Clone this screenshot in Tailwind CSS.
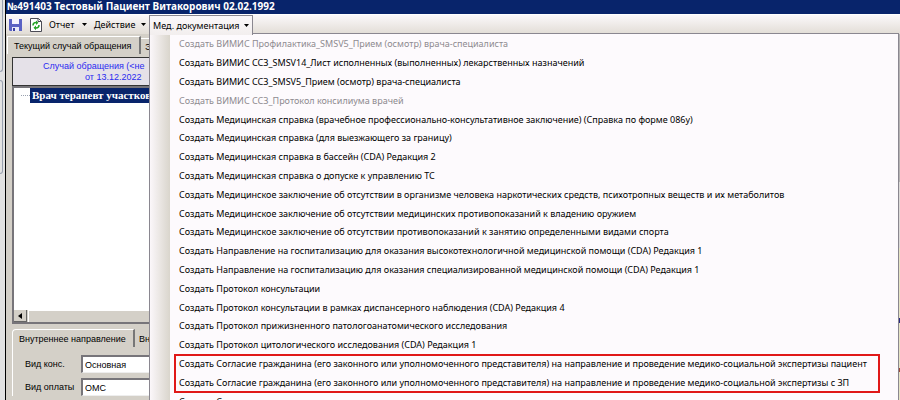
<!DOCTYPE html>
<html lang="ru">
<head>
  <meta charset="UTF-8" />
  <meta name="viewport" content="width=device-width, initial-scale=1.0"/>
  <title>Карта пациента</title>
  <script src="https://cdn.jsdelivr.net/npm/@tailwindcss/browser@4"></script>
</head>
<body class="h-screen overflow-hidden bg-[#d4d0c8] font-['Noto_Sans',sans-serif] text-[9px] leading-3 text-black flex">

  <!-- Edge of the neighbouring panel -->
  <div class="w-[6px] shrink-0 bg-[#e2e2e2] border-r border-black flex flex-col gap-2">
    <div class="w-[3px] h-[72px] border-r border-b border-gray-400 rounded-br-sm"></div>
    <div class="w-[3px] h-[94px] border-r border-y border-gray-400 rounded-r-sm"></div>
  </div>

  <div class="flex-1 min-w-0 flex flex-col">
    <h1 class="h-[14px] shrink-0 bg-[#08246b] text-white font-bold text-[10px] leading-3 pl-px whitespace-nowrap">№491403 Тестовый Пациент Витакорович 02.02.1992</h1>

    <!-- Toolbar -->
    <div class="relative h-5 shrink-0 border-t border-white bg-linear-to-b from-[#fbf8fa] to-[#e2ddd6] flex items-center whitespace-nowrap">
      <button class="ml-[3px] shrink-0" aria-label="Сохранить">
        <svg viewBox="0 0 13 12" class="w-[13px] h-3"><path d="M0 0h13v12H1L0 11z" fill="#5a62c4"/><path d="M3 0h7v5H3z" fill="#f4f4ff"/><path d="M3 8h7v4H3z" fill="#e8eafa"/><path d="M4 9h2v3H4z" fill="#3a3fa0"/></svg>
      </button>
      <button class="ml-2 shrink-0" aria-label="Обновить">
        <svg viewBox="0 0 12 14" class="w-3 h-[14px]"><path d="M.5.5h8l3 3v10H.5z" fill="#fff" stroke="#4b4b55"/><path d="M8 .5v3h3.500" fill="none" stroke="#4b4b55"/><path d="M3 7.500C3 5 5 4.500 6 4.500M9 7c0 2.500-2 3-3 3" fill="none" stroke="#25a325" stroke-width="1.500"/><path d="M6 2.500 8.500 4.700 6 7zM6 7.500v4.700L3.500 9.800z" fill="#25a325"/></svg>
      </button>
      <button class="ml-[7px] w-[38px] flex items-center justify-between">Отчет
        <svg viewBox="0 0 5 3" class="w-[5px] h-[3px]"><path d="M0 0h5L2.500 3z"/></svg>
      </button>
      <button class="ml-[7px] w-[52px] flex items-center justify-between">Действие
        <svg viewBox="0 0 5 3" class="w-[5px] h-[3px]"><path d="M0 0h5L2.500 3z"/></svg>
      </button>
      <button class="absolute left-[143px] top-0 z-20 h-5 w-[104px] border border-b-0 border-[#8a8790] bg-linear-to-b from-[#fbf8fa] to-[#f2eeee] flex items-center justify-between px-[3px]" aria-expanded="true">Мед. документация
        <svg viewBox="0 0 5 3" class="w-[5px] h-[3px]"><path d="M0 0h5L2.500 3z"/></svg>
      </button>

      <!-- Opened menu -->
      <div class="absolute left-[143px] right-px top-[18px] z-10 border border-[#8a8790] bg-[#fdfafd] flex pt-px">
        <div class="w-5 shrink-0 bg-linear-to-r from-[#fbf7fa] to-[#d9d5cc]"></div>
        <ul class="h-[376px] flex-1 min-w-0 pl-[9px] flex flex-col">
          <li class="flex-1 flex items-center"><button class="text-[#8e8b90]" disabled>Создать ВИМИС Профилактика_SMSV5_Прием (осмотр) врача-специалиста</button></li>
          <li class="flex-1 flex items-center"><button>Создать ВИМИС ССЗ_SMSV14_Лист исполненных (выполненных) лекарственных назначений</button></li>
          <li class="flex-1 flex items-center"><button>Создать ВИМИС ССЗ_SMSV5_Прием (осмотр) врача-специалиста</button></li>
          <li class="flex-1 flex items-center"><button class="text-[#8e8b90]" disabled>Создать ВИМИС ССЗ_Протокол консилиума врачей</button></li>
          <li class="flex-1 flex items-center"><button>Создать Медицинская справка (врачебное профессионально-консультативное заключение) (Справка по форме 086у)</button></li>
          <li class="flex-1 flex items-center"><button>Создать Медицинская справка (для выезжающего за границу)</button></li>
          <li class="flex-1 flex items-center"><button>Создать Медицинская справка в бассейн (CDA) Редакция 2</button></li>
          <li class="flex-1 flex items-center"><button>Создать Медицинская справка о допуске к управлению ТС</button></li>
          <li class="flex-1 flex items-center"><button>Создать Медицинское заключение об отсутствии в организме человека наркотических средств, психотропных веществ и их метаболитов</button></li>
          <li class="flex-1 flex items-center"><button>Создать Медицинское заключение об отсутствии медицинских противопоказаний к владению оружием</button></li>
          <li class="flex-1 flex items-center"><button>Создать Медицинское заключение об отсутствии противопоказаний к занятию определенными видами спорта</button></li>
          <li class="flex-1 flex items-center"><button>Создать Направление на госпитализацию для оказания высокотехнологичной медицинской помощи (CDA) Редакция 1</button></li>
          <li class="flex-1 flex items-center"><button>Создать Направление на госпитализацию для оказания специализированной медицинской помощи (CDA) Редакция 1</button></li>
          <li class="flex-1 flex items-center"><button>Создать Протокол консультации</button></li>
          <li class="flex-1 flex items-center"><button>Создать Протокол консультации в рамках диспансерного наблюдения (CDA) Редакция 4</button></li>
          <li class="flex-1 flex items-center"><button>Создать Протокол прижизненного патологоанатомического исследования</button></li>
          <li class="flex-1 flex items-center"><button>Создать Протокол цитологического исследования (CDA) Редакция 1</button></li>
          <li class="flex-2">
            <ul class="-ml-1 pl-1 pr-3 w-fit h-full flex flex-col outline-2 -outline-offset-1 outline-[#e01818]">
              <li class="flex-1 flex items-center"><button>Создать Согласие гражданина (его законного или уполномоченного представителя) на направление и проведение медико-социальной экспертизы пациент</button></li>
              <li class="flex-1 flex items-center"><button>Создать Согласие гражданина (его законного или уполномоченного представителя) на направление и проведение медико-социальной экспертизы с ЗП</button></li>
            </ul>
          </li>
          <li class="flex-1 flex items-center"><button>Создать Справка</button></li>
        </ul>
      </div>
    </div>

    <!-- Patient card -->
    <div class="flex-1 min-h-0 flex">
      <div class="w-[160px] pl-px pt-[2px] font-['Liberation_Sans',sans-serif] whitespace-nowrap">
        <div class="flex items-end">
          <button class="h-[18px] w-[134px] shrink-0 pl-[6px] text-left border-l border-t border-white border-r-2 border-r-[#777]">Текущий случай обращения</button>
          <button class="h-4 pl-1 text-left border-t border-white">Э</button>
        </div>
        <div class="pl-[5px] pt-[3px]">
          <div class="h-[29px] border border-[#333] bg-[#e5e1e8] text-[#2a2af0] pl-[30px] pt-[3px] leading-[11px]">
            <p>Случай обращения (&lt;не</p>
            <p class="pl-[42px]">от 13.12.2022</p>
          </div>
          <div class="h-[238px] border-2 border-[#77757a] bg-white flex flex-col justify-between">
            <div class="flex items-center h-[15px] pl-[7px]">
              <span class="w-[9px] shrink-0 border-t border-dotted border-gray-400"></span>
              <span class="flex-1 h-full pl-[2px] bg-[#08246b] text-white font-['Liberation_Serif',serif] font-bold text-[11px] leading-[15px]">Врач терапевт участковый</span>
            </div>
            <div class="h-3 flex gap-px bg-[#d4d0c8]">
              <button class="w-[13px] border-r border-b border-[#666] flex items-center justify-center" aria-label="Влево">
                <svg viewBox="0 0 4 6" class="w-1 h-[6px]"><path d="M4 0v6L0 3z"/></svg>
              </button>
              <div class="flex-1 border-l border-t border-white"></div>
            </div>
          </div>

          <!-- Referral form -->
          <div class="pt-[5px]">
            <div class="flex items-end">
              <button class="h-[18px] w-[123px] shrink-0 pl-[6px] text-left border-l border-t border-white rounded-tl-sm border-r-2 border-r-[#777]">Внутреннее направление</button>
              <button class="h-4 pl-1 text-left">Внешнее</button>
            </div>
            <div class="border-l border-white pl-3 pt-2 flex flex-col gap-[5px]">
              <div class="flex items-center">
                <label for="kind" class="w-14 shrink-0">Вид конс.</label>
                <input id="kind" type="text" value="Основная" class="w-24 h-[18px] pl-[2px] bg-white border-2 border-b border-[#77757a] border-b-[#eee]" />
              </div>
              <div class="flex items-center">
                <label for="pay" class="w-14 shrink-0">Вид оплаты</label>
                <input id="pay" type="text" value="ОМС" class="w-24 h-[18px] pl-[2px] bg-white border-2 border-b border-[#77757a] border-b-[#eee]" />
              </div>
            </div>
          </div>
        </div>
      </div>

      <!-- Right edge of the form behind the menu -->
      <div class="ml-auto w-px flex flex-col">
        <div class="h-[148px] bg-[#b5b3b3]"></div>
        <div class="h-[66px] bg-[#dcdad8]"></div>
        <div class="h-[70px] bg-[#e6e4c4]"></div>
        <div class="h-[5px] bg-[#2a2a80]"></div>
        <div class="h-[45px] bg-[#e6e4c4]"></div>
        <div class="h-1 bg-[#a04a3a]"></div>
        <div class="flex-1 bg-[#e6e4c4]"></div>
      </div>
    </div>
  </div>
</body>
</html>
